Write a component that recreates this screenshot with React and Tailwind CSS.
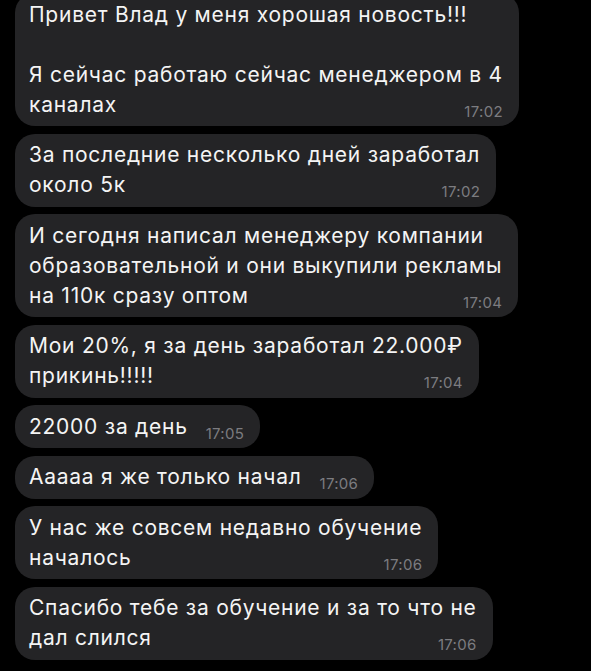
import React from 'react'

const messages = [
  {
    lines: ['Привет Влад у меня хорошая новость!!!', '\u00a0', 'Я сейчас работаю сейчас менеджером в 4', 'каналах'],
    time: '17:02',
  },
  { lines: ['За последние несколько дней заработал', 'около 5к'], time: '17:02' },
  {
    lines: ['И сегодня написал менеджеру компании', 'образовательной и они выкупили рекламы', 'на 110к сразу оптом'],
    time: '17:04',
  },
  { lines: ['Мои 20%, я за день заработал 22.000₽', 'прикинь!!!!!'], time: '17:04' },
  { lines: ['22000 за день'], time: '17:05' },
  { lines: ['Ааааа я же только начал'], time: '17:06' },
  { lines: ['У нас же совсем недавно обучение', 'началось'], time: '17:06' },
  { lines: ['Спасибо тебе за обучение и за то что не', 'дал слился'], time: '17:06' },
]

function Bubble({ lines, time }) {
  const head = lines.slice(0, -1)
  const last = lines[lines.length - 1]
  return (
    <div className="flex flex-col self-start rounded-[20px] bg-[#242426] py-[6.5px] pl-[14px] pr-[16px] text-[21px] leading-[30px] tracking-[0.75px] text-[#f4f4f4]">
      {head.map((l, i) => (
        <div key={i} className="whitespace-nowrap">
          {l}
        </div>
      ))}
      <div className="flex items-baseline justify-between gap-[18px] whitespace-nowrap">
        <span>{last}</span>
        <span className="translate-y-[5px] text-[15px] leading-none tracking-[0.3px] text-[#7c7c80]">{time}</span>
      </div>
    </div>
  )
}

export default function App() {
  return (
    <div
      className="h-[671px] w-[591px] overflow-hidden bg-black"
      style={{ fontFamily: 'Inter, "Noto Sans", sans-serif' }}
    >
      <div className="-mt-[7px] flex flex-col gap-[7.5px] pl-[15px]">
        {messages.map((m, i) => (
          <Bubble key={i} lines={m.lines} time={m.time} />
        ))}
      </div>
    </div>
  )
}
